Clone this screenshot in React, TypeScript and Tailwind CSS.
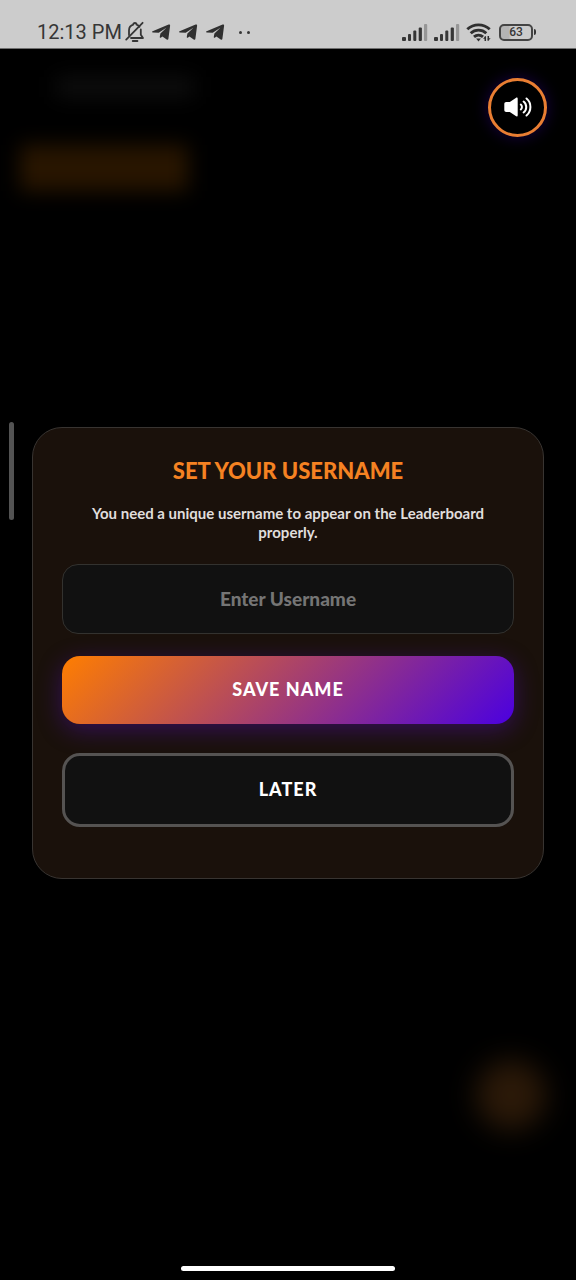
import { useState } from "react";

function BellOffIcon() {
  return (
    <svg viewBox="0 0 20 22" className="h-[22px] w-5" fill="none" stroke="#363636" strokeWidth="1.8" strokeLinecap="round" strokeLinejoin="round" aria-hidden="true">
      <path d="M4 14V9.200a6 6 0 0 1 4.200-5.500a1.700 1.700 0 0 1 3.400 0c1.200.4 2.200 1 2.900 2M15.800 8.500v5.200l2.200 3.300H6" />
      <path d="M7.800 20h4.600" strokeWidth="2" />
      <path d="M17.600 1.800L1.200 18.600" />
    </svg>
  );
}

function PlaneIcon() {
  return (
    <svg viewBox="0 0 20 18" className="h-[18px] w-5" fill="#303030" aria-hidden="true">
      <path d="M1.600 8.200L17.600 1.600c1-.3 1.600.1 1.500 1.100L17.400 15.800c-.1 1-.9 1.300-1.700.8l-4.300-3-1.300 1c-.8.500-1.500.1-1.300-.8l.6-3.400 6-5.700-7.700 5.100-5.900-.3c-.9-.2-1-.9-.2-1.300z" />
    </svg>
  );
}

function SignalIcon() {
  return (
    <svg viewBox="0 0 26 17" className="h-[17px] w-[26px]" fill="#363636" aria-hidden="true">
      <rect x="0" y="13" width="4" height="4" rx="1" />
      <rect x="6" y="10" width="3" height="7" rx="1" />
      <rect x="11.300" y="6.500" width="3" height="10.500" rx="1" />
      <rect x="16.700" y="3.500" width="3.200" height="13.500" rx="1" />
      <rect x="22" y="0" width="3.200" height="17" rx="1" fill="#969696" />
    </svg>
  );
}

function WifiIcon() {
  return (
    <svg viewBox="0 0 26 20" className="h-5 w-[26px]" fill="none" stroke="#303030" strokeWidth="2.9" aria-hidden="true">
      <path d="M1.300 7.300a16.500 16.500 0 0 1 22.400 0" />
      <path d="M4.700 11.200a11.500 11.500 0 0 1 15.600 0" />
      <path d="M8 14.900a6.800 6.800 0 0 1 9 0" />
      <path d="M10.100 16.400h4.800L12.500 19.400z" fill="#303030" stroke="none" />
      <path d="M19.300 14.500v4.500M22.300 14v4.500" strokeWidth="1.500" />
      <path d="M17 16.700L19.800 14v2.700zM24.700 16.300L21.800 19v-2.700z" fill="#303030" stroke="none" />
    </svg>
  );
}

function StatusBar() {
  return (
    <header className="flex h-[49px] items-end justify-between border-b border-[#6f6f6f] bg-[#cccccc] pr-10 pb-[5px] pl-[37px] text-[#363636]">
      <div className="flex h-[22px] items-center">
        <span className="font-[Roboto,sans-serif] text-[20px] leading-[22px]">12:13 PM</span>
        <span className="ml-[3px]"><BellOffIcon /></span>
        <span className="ml-[6px] flex gap-[7px]">
          <PlaneIcon />
          <PlaneIcon />
          <PlaneIcon />
        </span>
        <span className="ml-[14px] flex gap-[5px]">
          <span className="size-[3px] rounded-full bg-[#363636]" />
          <span className="size-[3px] rounded-full bg-[#363636]" />
        </span>
      </div>
      <div className="flex h-[22px] items-center">
        <span className="flex gap-[6px]">
          <SignalIcon />
          <SignalIcon />
        </span>
        <span className="ml-[6px]"><WifiIcon /></span>
        <span className="ml-[7px] flex items-center">
          <span className="flex h-[17px] w-[34px] items-center justify-center rounded-[5px] border-2 border-[#444444] bg-linear-to-r from-[#b4b4b4] from-25% to-[#cccccc] to-35% font-[Roboto,sans-serif] text-[12px] leading-3 font-medium">63</span>
          <span className="ml-px h-[6px] w-[2px] rounded-r-sm bg-[#363636]" />
        </span>
      </div>
    </header>
  );
}

function VolumeIcon({ muted }: { muted: boolean }) {
  return (
    <svg viewBox="0 0 28 20" className="h-5 w-7" fill="none" stroke="#ffffff" strokeWidth="2" strokeLinecap="round" aria-hidden="true">
      <path d="M2.300 5h3.500L11.800.9c1.100-.7 1.900-.2 1.900.9v16.400c0 1.100-.8 1.600-1.900.9L5.800 15H2.300C1 15 .3 14.300.3 13V7c0-1.300.7-2 2-2z" fill="#ffffff" stroke="none" />
      {!muted && (
        <>
          <path d="M16.800 7.500c1.500 1.200 1.500 3.800 0 5" />
          <path d="M19.600 4.500c3.500 2.700 3.500 8.300 0 11" />
          <path d="M22.500 1.500c5.200 4.200 5.200 12.800 0 17" />
        </>
      )}
    </svg>
  );
}

function Backdrop() {
  return (
    <div aria-hidden="true" className="pointer-events-none absolute inset-0 flex flex-col justify-between overflow-hidden">
      <div className="flex flex-col gap-12 pt-7 pl-5">
        <div className="ml-9 h-5 w-[138px] bg-[#0e0e0e] blur-[10px]" />
        <div className="h-[46px] w-[168px] bg-[#281500] blur-[10px]" />
      </div>
      <div className="mr-[30px] mb-[126px] size-[70px] self-end rounded-full bg-[#2b1908] blur-[14px]" />
    </div>
  );
}

export default function App() {
  const [name, setName] = useState("");
  const [open, setOpen] = useState(true);
  const [muted, setMuted] = useState(false);

  return (
    <div className="flex min-h-screen flex-col bg-black font-[Lato,sans-serif]">
      <StatusBar />
      <main className="relative flex flex-1 flex-col justify-center px-8">
        <Backdrop />
        <button
          type="button"
          aria-label={muted ? "Unmute" : "Mute"}
          onClick={() => setMuted(!muted)}
          className="absolute top-[29px] right-[29px] flex size-[59px] items-center justify-center rounded-full border-3 border-[#e97e32] bg-black pb-px shadow-[0_0_16px_#4b00e04d]"
        >
          <VolumeIcon muted={muted} />
        </button>
        <div className="absolute top-[373px] left-[9px] h-[98px] w-[5px] rounded-full bg-[#535353]" />
        {open && (
          <form
            role="dialog"
            aria-labelledby="username-title"
            onSubmit={(event) => event.preventDefault()}
            className="relative flex flex-col rounded-[30px] border border-[#383431] bg-[#1a110b] px-[29px] pt-[29px] pb-[51px] text-center"
          >
            <h1 id="username-title" className="text-[22px] leading-7 font-black text-[#f58222]">SET YOUR USERNAME</h1>
            <p className="mt-[19px] px-4 text-[15px] leading-[19px] font-bold text-[#e0dedd]">
              You need a unique username to appear on the Leaderboard properly.
            </p>
            <input
              type="text"
              aria-label="Username"
              placeholder="Enter Username"
              value={name}
              onChange={(event) => setName(event.target.value)}
              className="mt-[22px] h-[70px] w-full rounded-[16px] border border-[#33322f] bg-[#111111] px-4 text-center text-[19px] font-black text-white outline-none placeholder:text-[#757575]"
            />
            <button
              type="submit"
              className="mt-[22px] h-[68px] rounded-[18px] bg-[linear-gradient(135deg,#ff7e00,#4b00e0)] text-[18px] font-black tracking-[1px] text-white shadow-[0_6px_24px_#5a10c866]"
            >
              SAVE NAME
            </button>
            <button
              type="button"
              onClick={() => setOpen(false)}
              className="mt-[29px] h-[74px] rounded-[18px] border-3 border-[#555352] bg-[#111111] text-[18px] font-black tracking-[1px] text-white"
            >
              LATER
            </button>
          </form>
        )}
      </main>
      <footer className="flex h-6 items-center justify-center">
        <div className="h-[5px] w-[37%] rounded-full bg-white" />
      </footer>
    </div>
  );
}
